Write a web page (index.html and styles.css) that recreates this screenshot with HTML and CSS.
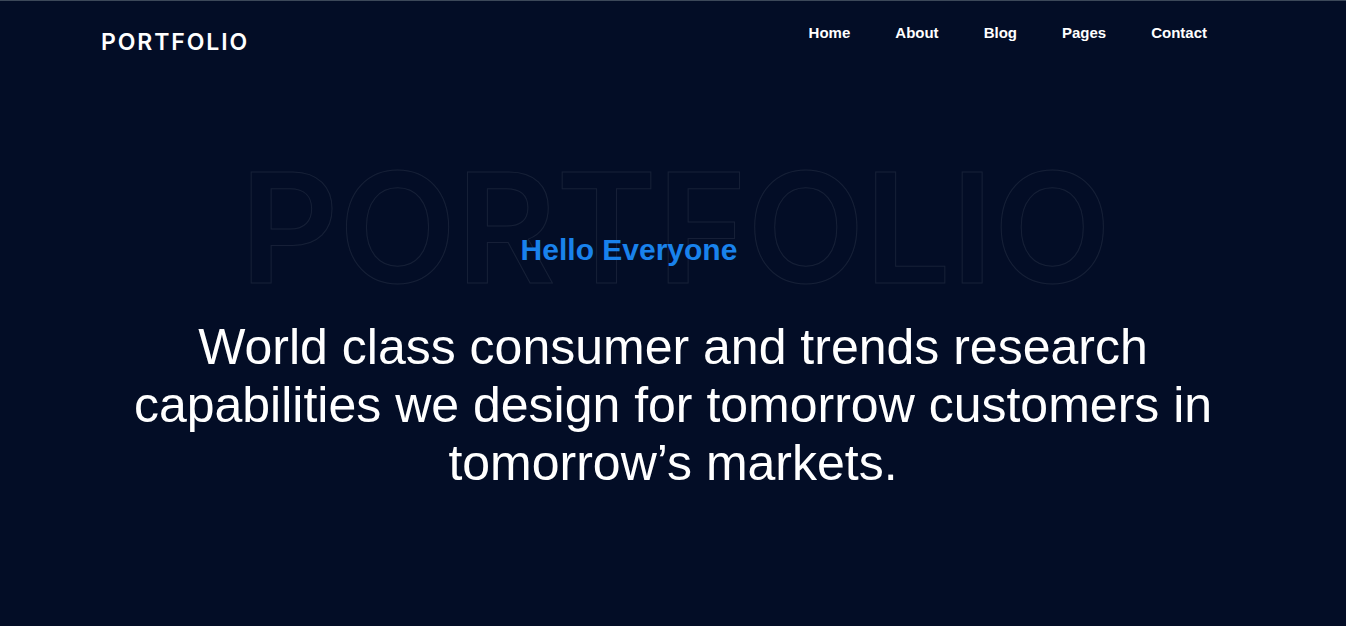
FILE: index.html
```html
<!DOCTYPE html>
<html lang="en">
<head>
<meta charset="utf-8">
<title>Portfolio</title>
<link rel="stylesheet" href="styles.css">
</head>
<body>
<header class="site-header">
  <div class="logo">PORTFOLIO</div>
  <nav class="main-nav">
    <a href="#">Home</a>
    <a href="#">About</a>
    <a href="#">Blog</a>
    <a href="#">Pages</a>
    <a href="#">Contact</a>
  </nav>
</header>
<section class="hero">
  <div class="hero-head">
    <div class="outline-title" aria-hidden="true">PORTFOLIO</div>
    <h3 class="hello">Hello Everyone</h3>
  </div>
  <h1 class="hero-text">World class consumer and trends research<br>capabilities we design for tomorrow customers in<br>tomorrow’s markets.</h1>
</section>
</body>
</html>
```
FILE: styles.css
```css
html, body {
  margin: 0;
  padding: 0;
}
body {
  background: #030d26;
  border-top: 1px solid #3c4859;
  color: #fff;
  font-family: "Liberation Sans", Arial, sans-serif;
  min-height: 625px;
  overflow: hidden;
}
.site-header {
  display: flex;
  justify-content: space-between;
  align-items: flex-start;
  height: 80px;
  padding: 0 117px 0 101px;
}
.logo {
  font-family: Inter, "Noto Sans", sans-serif;
  font-weight: 600;
  font-size: 23px;
  line-height: 23px;
  letter-spacing: 1.9px;
  margin-top: 30px;
  color: #fff;
}
.main-nav {
  display: flex;
  padding-top: 23px;
}
.main-nav a {
  color: #fff;
  text-decoration: none;
  font-weight: 700;
  font-size: 15px;
  line-height: 18px;
  padding: 0 22.5px;
}
.main-nav a:last-child {
  padding-right: 22px;
}
.hero {
  padding-top: 70px;
  text-align: center;
}
.hero-head {
  position: relative;
  padding-top: 81px;
}
.outline-title {
  position: absolute;
  left: 0;
  right: 0;
  top: 0;
  font-family: Inter, "Noto Sans", sans-serif;
  font-weight: 600;
  font-size: 153px;
  line-height: 153px;
  color: transparent;
  -webkit-text-stroke: 1px rgba(255, 255, 255, 0.08);
  padding-left: 5px;
}
.hello {
  position: relative;
  margin: 0;
  padding-right: 88px;
  font-size: 30px;
  line-height: 36px;
  font-weight: 700;
  color: #1982ec;
}
.hero-text {
  margin: 50px 0 0;
  font-size: 50px;
  line-height: 58px;
  font-weight: 400;
  color: #fff;
}
```
